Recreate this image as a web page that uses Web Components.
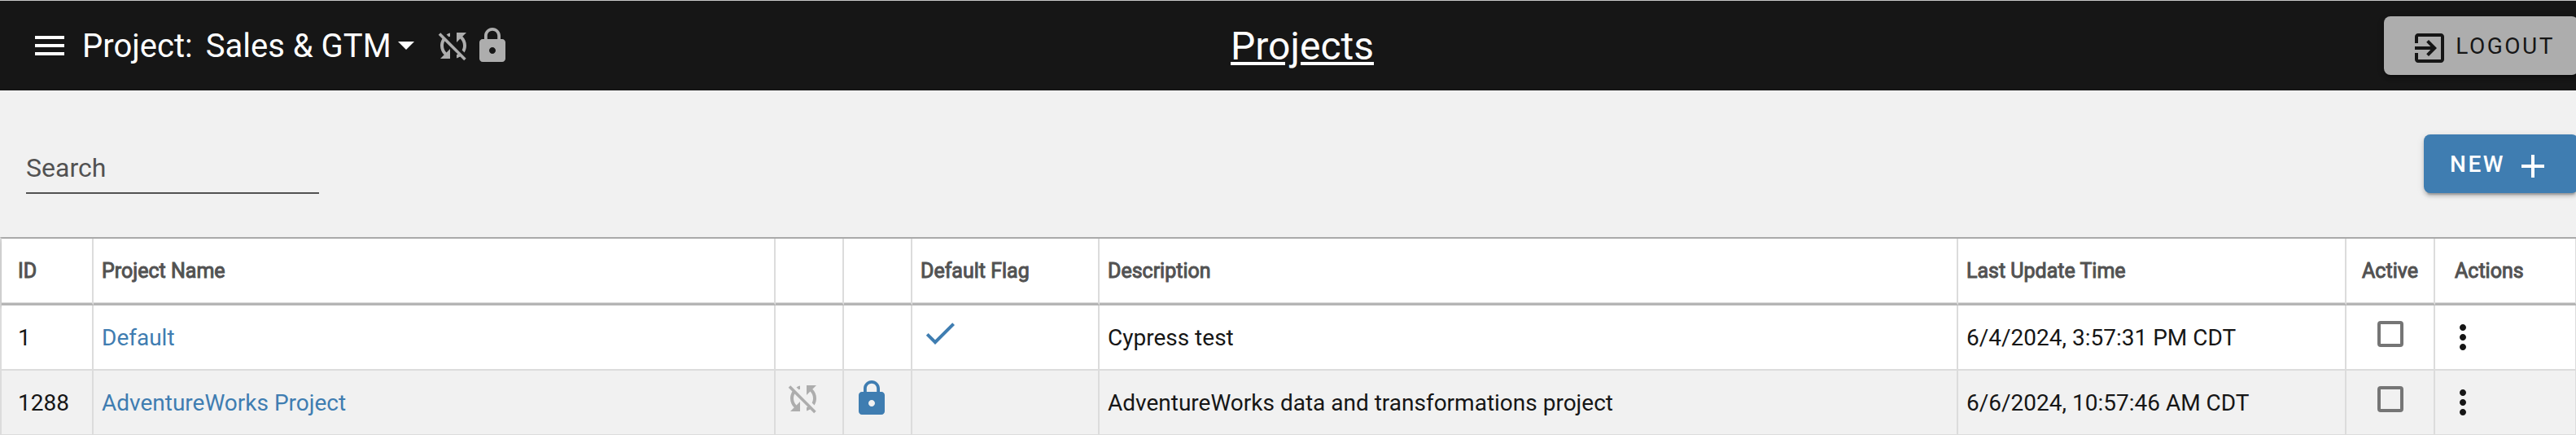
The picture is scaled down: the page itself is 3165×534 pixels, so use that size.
<!DOCTYPE html>
<html lang="en">
<head>
<meta charset="utf-8">
<title>Projects</title>
<style>
  body { margin: 0; background: #f1f1f1; color: #161616; font-family: Roboto, sans-serif; font-size: 28px; overflow-x: hidden; }
</style>
</head>
<body>
<projects-page></projects-page>

<script>
const ICONS = {
  menu: 'M3 18h18v-2H3v2zm0-5h18v-2H3v2zm0-7v2h18V6H3z',
  lock: 'M18 8h-1V6c0-2.76-2.24-5-5-5S7 3.240 7 6v2H6c-1.100 0-2 .9-2 2v10c0 1.100.9 2 2 2h12c1.100 0 2-.9 2-2V10c0-1.100-.9-2-2-2zm-6 9c-1.100 0-2-.9-2-2s.9-2 2-2 2 .9 2 2-.9 2-2 2zM15.100 8H8.900V6c0-1.710 1.390-3.100 3.100-3.100s3.100 1.390 3.100 3.100v2z',
  sync_disabled: 'M10 6.350V4.260c-.8.210-1.550.540-2.230.960l1.460 1.460c.250-.120.500-.240.770-.330zm-7.140-.940l2.360 2.360C4.450 8.990 4 10.440 4 12c0 2.210.910 4.200 2.360 5.640L4 20h6v-6l-2.240 2.240C6.680 15.150 6 13.660 6 12c0-1 .250-1.940.680-2.770l8.080 8.080c-.250.130-.500.250-.770.340v2.090c.8-.210 1.550-.540 2.230-.960l2.360 2.360 1.270-1.270L4.140 4.140 2.860 5.410zM20 4h-6v6l2.240-2.240C17.320 8.850 18 10.340 18 12c0 1-.250 1.940-.680 2.770l1.460 1.460C19.550 15.010 20 13.560 20 12c0-2.210-.910-4.200-2.360-5.640L20 4z',
  check: 'M9 16.170L4.830 12l-1.420 1.410L9 19 21 7l-1.410-1.410z',
  add: 'M19 13h-6v6h-2v-6H5v-2h6V5h2v6h6v2z',
  exit: 'M10.090 15.590L11.500 17l5-5-5-5-1.410 1.410L12.670 11H3v2h9.670l-2.580 2.590zM19 3H5c-1.110 0-2 .9-2 2v4h2V5h14v14H5v-4H3v4c0 1.100.890 2 2 2h14c1.100 0 2-.9 2-2V5c0-1.100-.9-2-2-2z',
  more: 'M12 8c1.100 0 2-.9 2-2s-.9-2-2-2-2 .9-2 2 .9 2 2 2zm0 2c-1.100 0-2 .9-2 2s.9 2 2 2 2-.9 2-2-.9-2-2-2zm0 6c-1.100 0-2 .9-2 2s.9 2 2 2 2-.9 2-2-.9-2-2-2z'
};

const define = (name, html, setup) => {
  const template = document.createElement('template');
  template.innerHTML = html;
  customElements.define(name, class extends HTMLElement {
    constructor() {
      super();
      this.attachShadow({ mode: 'open' }).append(template.content.cloneNode(true));
    }
    connectedCallback() { if (setup) setup(this, this.shadowRoot); }
  });
};

define('ui-icon', `
  <style>
    :host { display: block; flex: none; width: 48px; height: 48px; }
    svg { display: block; width: 100%; height: 100%; fill: currentColor; }
  </style>
  <svg viewBox="0 0 24 24" aria-hidden="true"><path/></svg>`,
  (el, root) => root.querySelector('path').setAttribute('d', ICONS[el.getAttribute('name')]));

define('icon-button', `
  <style>
    :host { display: block; }
    button { display: block; margin: 0; padding: 0; border: 0; background: none; color: inherit; cursor: pointer; }
  </style>
  <button type="button"><slot></slot></button>`,
  (el, root) => root.querySelector('button').setAttribute('aria-label', el.getAttribute('label')));

define('raised-button', `
  <style>
    :host { display: block; }
    button {
      display: flex; align-items: center; height: 72px; margin: 0; border: 0; border-radius: 8px;
      padding: var(--button-padding, 0 32px); gap: var(--button-gap, 8px);
      background: var(--button-fill); color: var(--button-ink);
      font: var(--button-weight, 500) 28px Roboto, sans-serif; letter-spacing: 0.09em; text-transform: uppercase; cursor: pointer;
      box-shadow: 0 6px 2px -4px rgba(0,0,0,.2), 0 4px 4px rgba(0,0,0,.14), 0 2px 10px rgba(0,0,0,.12);
    }
    ::slotted(ui-icon) { margin-top: 6px; }
  </style>
  <button type="button"><slot></slot></button>`);

define('project-picker', `
  <style>
    :host { display: flex; align-items: center; gap: 16px; font-size: 40px; }
    .field { display: grid; align-items: center; }
    select, svg { grid-area: 1 / 1; }
    select { appearance: none; margin: 0; border: 0; padding: 0 28px 0 0; background: none; color: inherit; font: inherit; }
    svg { justify-self: end; width: 20px; height: 10px; fill: currentColor; pointer-events: none; }
  </style>
  <label for="project">Project:</label>
  <div class="field">
    <select id="project"><option>Sales &amp; GTM</option></select>
    <svg viewBox="0 0 20 10" aria-hidden="true"><path d="M0 0h20L10 10z"/></svg>
  </div>`);

define('app-bar', `
  <style>
    :host { display: block; background: #161616; color: #fff; border-top: 1px solid #c6c6c6; }
    header { display: grid; grid-template-columns: 1fr auto 1fr; align-items: center; height: 110px; padding: 0 32px; }
    .start, .status { display: flex; align-items: center; }
    .start { gap: 16px; padding-left: 5px; }
    .status { color: #adadad; margin-left: 8px; }
    h1 { margin: 0; font-size: 48px; font-weight: 400; text-decoration: underline; }
    raised-button { justify-self: end; --button-fill: #adadad; --button-ink: #161616; --button-weight: 400; --button-padding: 0 29px 0 32px; }
  </style>
  <header>
    <div class="start">
      <icon-button label="Menu"><ui-icon name="menu"></ui-icon></icon-button>
      <project-picker></project-picker>
      <div class="status"><ui-icon name="sync_disabled"></ui-icon><ui-icon name="lock"></ui-icon></div>
    </div>
    <h1>Projects</h1>
    <raised-button><ui-icon name="exit"></ui-icon>Logout</raised-button>
  </header>`);

define('search-bar', `
  <style>
    :host { display: flex; align-items: flex-start; justify-content: space-between; padding: 54px 32px 53px; }
    input { box-sizing: border-box; width: 360px; height: 73px; margin: 0; padding: 10px 0 0; border: 0; border-bottom: 2px solid #525252; outline: 0; background: none; color: #161616; font: 32px Roboto, sans-serif; }
    input::placeholder { color: #525252; opacity: 1; }
    raised-button { --button-fill: #3f7db1; --button-ink: #fff; --button-gap: 10px; }
  </style>
  <input type="search" placeholder="Search" aria-label="Search">
  <raised-button>New<ui-icon name="add"></ui-icon></raised-button>`);

define('project-table', `
  <style>
    :host { display: block; }
    table { width: 100%; table-layout: fixed; border-collapse: separate; border-spacing: 0; border-top: 2px solid #adadad; border-left: 2px solid #dcdcdc; }
    .id { width: 113px; } .name { width: 838px; } .mark { width: 84px; } .flag { width: 230px; }
    .time { width: 477px; } .active { width: 109px; } .actions { width: 174px; }
    th, td { box-sizing: border-box; height: 80px; padding: 0 10px; border-right: 2px solid #dcdcdc; border-bottom: 2px solid #dcdcdc; text-align: left; white-space: nowrap; }
    th:first-child, td:first-child { padding-left: 20px; }
    thead tr { box-shadow: 0 2px 4px rgba(0,0,0,.2); }
    th { height: 82px; border-bottom: 3px solid #b5b5b5; color: #525252; font-size: 25px; font-weight: 400; -webkit-text-stroke: 1px #525252; box-shadow: inset 0 -1px #dcdcdc; }
    th:last-child { padding-left: 24px; }
    th.center, td.center { text-align: center; }
    tbody tr { background: #fff; }
    thead tr { background: #fff; }
    tbody tr:nth-child(even) { background: #f1f1f1; }
    td { font-size: 28px; }
    td.icon { padding-bottom: 10px; color: #3f7db1; }
    td.muted { color: #adadad; }
    td.center { padding-bottom: 8px; }
    a { color: #3f7db1; text-decoration: none; }
    input { appearance: none; display: block; box-sizing: border-box; width: 32px; height: 32px; margin: 0 auto; border: 4px solid #757575; border-radius: 4px; }
  </style>
  <table>
    <colgroup><col class="id"><col class="name"><col class="mark"><col class="mark"><col class="flag"><col><col class="time"><col class="active"><col class="actions"></colgroup>
    <thead>
      <tr><th>ID</th><th>Project Name</th><th></th><th></th><th>Default Flag</th><th>Description</th><th>Last Update Time</th><th class="center">Active</th><th>Actions</th></tr>
    </thead>
    <tbody>
      <tr>
        <td>1</td><td><a href="#default">Default</a></td><td></td><td></td>
        <td class="icon"><ui-icon name="check"></ui-icon></td>
        <td>Cypress test</td><td>6/4/2024, 3:57:31 PM CDT</td>
        <td class="center"><input type="checkbox" aria-label="Default active"></td>
        <td><icon-button label="Default actions"><ui-icon name="more"></ui-icon></icon-button></td>
      </tr>
      <tr>
        <td>1288</td><td><a href="#adventureworks">AdventureWorks Project</a></td>
        <td class="icon muted"><ui-icon name="sync_disabled"></ui-icon></td>
        <td class="icon"><ui-icon name="lock"></ui-icon></td><td></td>
        <td>AdventureWorks data and transformations project</td><td>6/6/2024, 10:57:46 AM CDT</td>
        <td class="center"><input type="checkbox" aria-label="AdventureWorks Project active"></td>
        <td><icon-button label="AdventureWorks Project actions"><ui-icon name="more"></ui-icon></icon-button></td>
      </tr>
    </tbody>
  </table>`);

define('projects-page', `
  <style>
    :host { display: block; }
    /* The bars run wider than the window, as they do with the side panel folded away. */
    app-bar, search-bar { margin-right: -35px; }
    project-table { margin-right: -1px; }
  </style>
  <app-bar></app-bar>
  <main>
    <search-bar></search-bar>
    <project-table></project-table>
  </main>`);
</script>
</body>
</html>
